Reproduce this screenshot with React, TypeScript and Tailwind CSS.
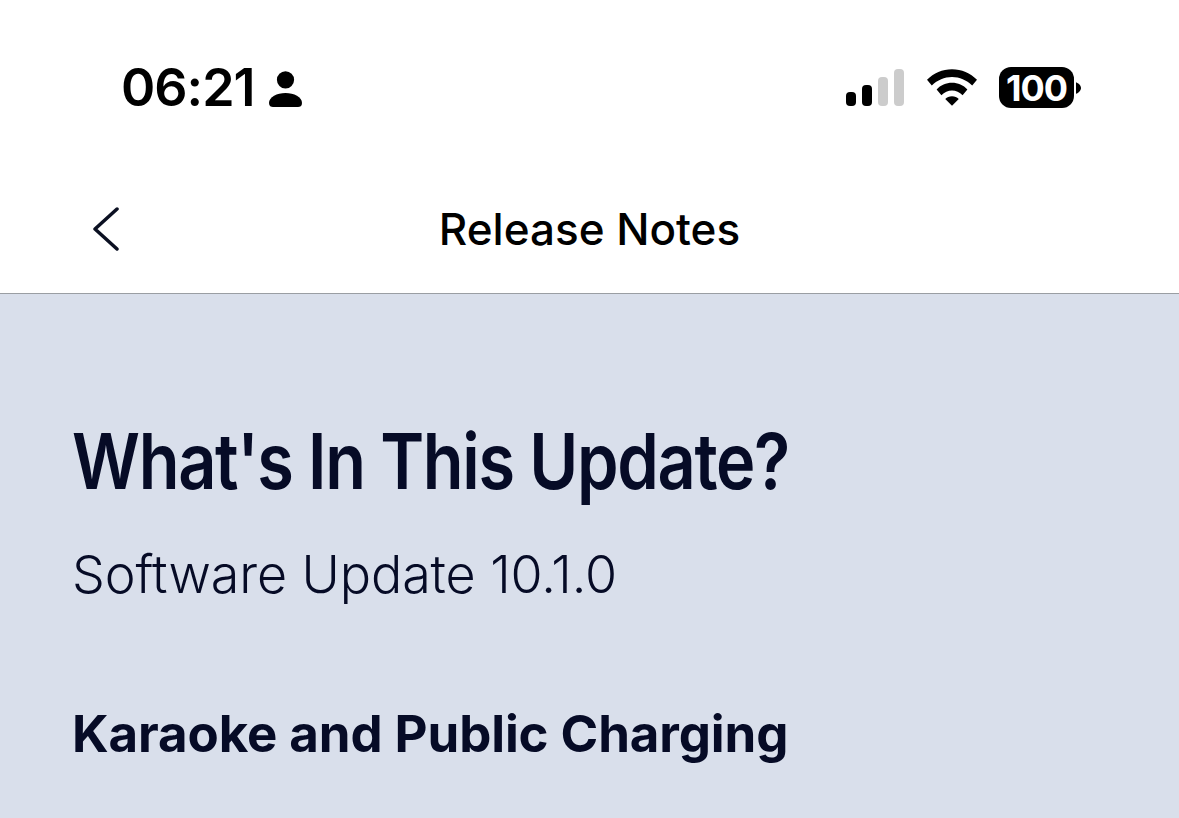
function PersonIcon() {
  return (
    <svg width="33" height="36" viewBox="0 0 33 36" className="ml-[14px] mt-[2px]" aria-hidden="true">
      <circle cx="16.500" cy="8.800" r="8.600" fill="#000" />
      <path d="M0 32C0 26 8 22 16.500 22S33 26 33 32C33 35 31 36 29 36H4C2 36 0 35 0 32z" fill="#000" />
    </svg>
  );
}

function SignalIcon() {
  return (
    <svg width="58" height="37" viewBox="0 0 58 37" className="mr-[1px]" aria-hidden="true">
      <rect x="0" y="23" width="10" height="14" rx="4" fill="#000" />
      <rect x="16" y="16" width="10" height="21" rx="4" fill="#000" />
      <rect x="32" y="8" width="10" height="29" rx="4" fill="#ccc" />
      <rect x="48" y="0" width="10" height="37" rx="4" fill="#ccc" />
    </svg>
  );
}

function WifiIcon() {
  return (
    <svg width="50" height="37" viewBox="0 0 52 38" aria-hidden="true">
      <path d="M26 0C16 0 7 4 0 11l5 6c6-6 13-9 21-9s15 3 21 9l5-6C45 4 36 0 26 0z" fill="#000" />
      <path d="M26 14c-6 0-12 2.500-16 7l5 6c3-3 7-5 11-5s8 2 11 5l5-6c-4-4.500-10-7-16-7z" fill="#000" />
      <path d="M26 28c-3 0-5 1-7 3l7 7 7-7c-2-2-4-3-7-3z" fill="#000" />
    </svg>
  );
}

function Battery() {
  return (
    <div className="flex items-center">
      <div className="flex h-[41px] w-[75px] items-center justify-center rounded-[12px] bg-black text-[36px] font-bold tracking-[-1px] text-white">
        100
      </div>
      <svg width="5" height="14" viewBox="0 0 6 14" className="ml-[2px]" aria-hidden="true">
        <path d="M0 0c3 1 6 4 6 7s-3 6-6 7z" fill="#000" />
      </svg>
    </div>
  );
}

function BackChevron() {
  return (
    <svg width="28" height="44" viewBox="0 0 28 44" className="absolute left-[92px] top-[32px]" aria-hidden="true">
      <path d="M25 2 3 22l22 20" fill="none" stroke="#0b1022" strokeWidth="3.500" strokeLinecap="round" strokeLinejoin="round" />
    </svg>
  );
}

export default function App() {
  return (
    <div className="flex h-[818px] w-[1179px] flex-col overflow-hidden bg-white font-['Inter',sans-serif]">
      <div className="flex h-[175px] items-start justify-between pl-[121px] pr-[98px] pt-[67px]">
        <div className="flex items-center">
          <span className="text-[52px] font-semibold leading-[42px] tracking-[-1px] text-black">06:21</span>
          <PersonIcon />
        </div>
        <div className="flex items-center gap-[22px]">
          <SignalIcon />
          <WifiIcon />
          <Battery />
        </div>
      </div>

      <div className="relative flex h-[119px] items-start justify-center border-b border-[#9a9ea3] pt-[29px]">
        <BackChevron />
        <h1 className="text-[44px] font-medium leading-[50px] text-black">Release Notes</h1>
      </div>

      <div className="flex-1 bg-[#d9dfeb] pl-[72px] pt-[125px] text-[#060b26]">
        <h2 className="origin-left scale-x-[0.865] whitespace-nowrap text-[77px] font-semibold leading-[84px] tracking-[-1.500px]">What's In This Update?</h2>
        <p className="mt-[40px] text-[52px] font-[350] leading-[64px] tracking-[-0.1px]">Software Update 10.1.0</p>
        <h3 className="mt-[95px] text-[51px] font-bold leading-[64px] tracking-[-0.1px]">Karaoke and Public Charging</h3>
      </div>
    </div>
  );
}
